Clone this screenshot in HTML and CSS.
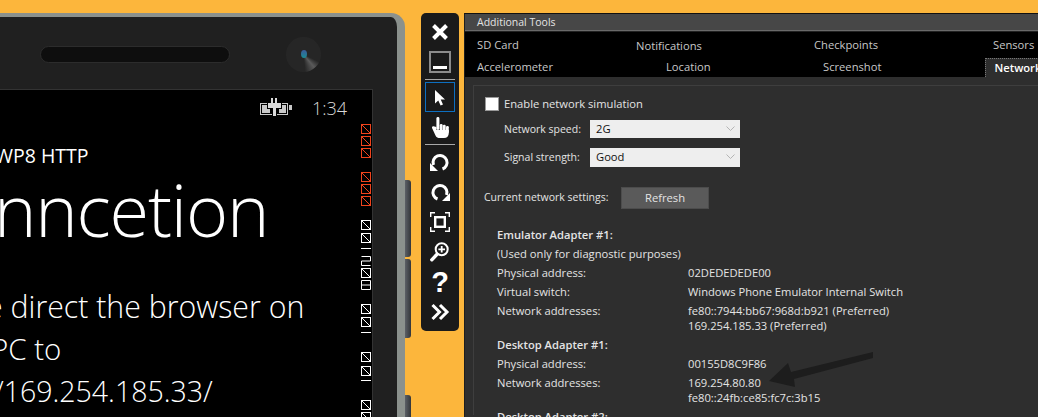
FILE: index.html
```html
<!DOCTYPE html>
<html lang="en">
<head>
  <meta charset="UTF-8">
  <title>Windows Phone Emulator - Additional Tools</title>
  <link rel="stylesheet" href="styles.css">
</head>
<body>
<div class="stage">
  <div class="phone">
    <div class="bezel">
      <div class="speaker"></div>
      <div class="camera"><span class="lens"></span></div>
    </div>
    <div class="screen">
      <div class="status">
        <svg class="battery" width="32" height="18" viewBox="0 0 32 18">
          <rect x="0.5" y="5.5" width="27" height="11" fill="none" stroke="#c8c8c8"/>
          <rect x="2" y="7" width="8" height="8" fill="#c8c8c8"/>
          <rect x="19" y="7" width="7" height="8" fill="#c8c8c8"/>
          <rect x="29" y="7" width="3" height="5" fill="#c8c8c8"/>
          <path d="M7 4h15v7h-5v7h-5v-7H7z" fill="#000"/>
          <path d="M11 0h2v5h2V0h2v5h4v5h-5v8h-3v-8H8V5h3z" fill="#d8d8d8"/>
        </svg>
        <span class="clock">1:34</span>
      </div>
      <p class="app-title">WP8 HTTP</p>
      <h1 class="page-title">nncetion</h1>
      <p class="body-text">
        <span class="line line-a">e direct the browser on</span>
        <span class="line line-b">PC to</span>
        <span class="line line-c">/169.254.185.33/</span>
      </p>

      <svg class="counters" width="12" height="327" viewBox="0 0 12 327">
        <defs>
          <g id="cell">
            <rect x="1.500" y="0.500" width="9" height="9" fill="none" stroke="currentColor"/>
            <path d="M1.500 0.500l9 9" stroke="currentColor"/>
          </g>
        </defs>
        <g class="counter-red">
          <use href="#cell" y="0"/><use href="#cell" y="12"/><use href="#cell" y="24"/>
          <use href="#cell" y="48"/><use href="#cell" y="60"/><use href="#cell" y="72"/>
        </g>
        <g class="counter-white">
          <use href="#cell" y="96"/><use href="#cell" y="109"/>
          <path d="M1 124.500h10"/>
          <path d="M1.500 132.500h9v4.500h-9v4.500h9"/>
          <use href="#cell" y="144"/>
          <path d="M1.500 156.500h9v9h-9zM1.500 161h9"/>
          <use href="#cell" y="180"/><use href="#cell" y="193"/>
          <path d="M1 208.500h10"/>
          <use href="#cell" y="228"/><use href="#cell" y="242"/>
          <path d="M1 256.500h10"/>
          <use href="#cell" y="276"/><use href="#cell" y="288"/>
        </g>
      </svg>
    </div>
  </div>

  <div class="side-keys">
    <span class="key key-a"></span>
    <span class="key key-b"></span>
    <span class="key key-c"></span>
  </div>

  <div class="toolbar">
    <div class="tool">
      <svg viewBox="0 0 30 30"><path d="M8.500 8.500l13 13M21.500 8.500l-13 13" stroke="#fff" stroke-width="4" fill="none"/></svg>
    </div>
    <div class="tool">
      <svg viewBox="0 0 30 30"><rect x="5" y="5" width="20" height="20" fill="none" stroke="#8c8c8c" stroke-width="2"/><rect x="8" y="19" width="14" height="3" fill="#fff"/></svg>
    </div>
    <div class="tool-sep"></div>
    <div class="tool tool-active">
      <svg viewBox="0 0 30 30"><path d="M10 8v13.500l3.300-3.100 2.300 5.100 2.400-1.100-2.300-4.900H20z" fill="#fff"/></svg>
    </div>
    <div class="tool">
      <svg viewBox="0 0 30 30" fill="#fff">
        <rect x="11.400" y="5" width="3" height="13" rx="1.400"/>
        <rect x="14.800" y="12" width="2.800" height="8" rx="1.200"/>
        <rect x="17.900" y="12.800" width="2.800" height="8" rx="1.200"/>
        <rect x="21" y="14" width="2.800" height="7" rx="1.200"/>
        <path d="M11.400 15l-2.900-.8c-1.500-.2-1.900 1.300-1.100 2.600l3.100 6.700c.8 2 2.500 2.500 4.500 2.500h4c3 0 4.800-2 4.800-5v-3H11.400z"/>
      </svg>
    </div>
    <div class="tool-sep"></div>
    <div class="tool">
      <svg viewBox="0 0 30 30"><g transform="matrix(-1 0 0 1 30 0)"><path d="M12.500 22A7 7 0 1 1 21.500 18" fill="none" stroke="#fff" stroke-width="3"/><path d="M25 16v8h-8z" fill="#fff"/></g></svg>
    </div>
    <div class="tool">
      <svg viewBox="0 0 30 30"><path d="M12.500 22A7 7 0 1 1 21.500 18" fill="none" stroke="#fff" stroke-width="3"/><path d="M25 16v8h-8z" fill="#fff"/></svg>
    </div>
    <div class="tool">
      <svg viewBox="0 0 30 30" fill="none" stroke="#fff">
        <path d="M5.700 10V5.700H10M20 5.700h4.300V10M24.300 20v4.300H20M10 24.300H5.700V20" stroke-width="1.400"/>
        <rect x="10.200" y="10.200" width="9.600" height="9.600" stroke-width="2.400"/>
      </svg>
    </div>
    <div class="tool">
      <svg viewBox="0 0 30 30" fill="none" stroke="#fff">
        <circle cx="16.700" cy="12.300" r="6" stroke-width="2"/>
        <path d="M16.700 9v6.600M13.400 12.300H20" stroke-width="1.800"/>
        <path d="M11.800 17.500l-5 5.300" stroke-width="3.400" stroke-linecap="round"/>
      </svg>
    </div>
    <div class="tool tool-help">?</div>
    <div class="tool">
      <svg viewBox="0 0 30 30"><path d="M7.500 8l7 7-7 7M15 8l7 7-7 7" fill="none" stroke="#fff" stroke-width="3"/></svg>
    </div>
  </div>

  <div class="panel">
    <div class="panel-title">Additional Tools</div>
    <div class="tabs">
      <div class="tab-row tab-row-top">
        <span class="tab">SD Card</span>
        <span class="tab tab-low">Notifications</span>
        <span class="tab">Checkpoints</span>
        <span class="tab">Sensors</span>
      </div>
      <div class="tab-row tab-row-bottom">
        <span class="tab">Accelerometer</span>
        <span class="tab">Location</span>
        <span class="tab">Screenshot</span>
        <span class="tab tab-active">Network</span>
      </div>
    </div>
    <div class="group">
      <label class="check-row"><span class="checkbox"></span><span class="check-label">Enable network simulation</span></label>
      <div class="field field-speed">
        <span class="field-label">Network speed:</span>
        <div class="combo">2G <svg width="9" height="5" viewBox="0 0 9 5"><path d="M.5.500l4 4 4-4" fill="none" stroke="#b4b4b4"/></svg></div>
      </div>
      <div class="field field-signal">
        <span class="field-label">Signal strength:</span>
        <div class="combo">Good <svg width="9" height="5" viewBox="0 0 9 5"><path d="M.5.500l4 4 4-4" fill="none" stroke="#b4b4b4"/></svg></div>
      </div>
      <div class="refresh-row">
        <span class="refresh-label">Current network settings:</span>
        <button class="refresh">Refresh</button>
      </div>
      <div class="details">
        <h3>Emulator Adapter #1:</h3>
        <p>(Used only for diagnostic purposes)</p>
        <div class="kv"><span>Physical address:</span><span>02DEDEDEDE00</span></div>
        <div class="kv"><span>Virtual switch:</span><span>Windows Phone Emulator Internal Switch</span></div>
        <div class="kv"><span>Network addresses:</span><span>fe80::7944:bb67:968d:b921 (Preferred)</span></div>
        <div class="kv kv-more"><span></span><span>169.254.185.33 (Preferred)</span></div>
        <h3>Desktop Adapter #1:</h3>
        <div class="kv"><span>Physical address:</span><span>00155D8C9F86</span></div>
        <div class="kv"><span>Network addresses:</span><span>169.254.80.80</span></div>
        <div class="kv kv-more"><span></span><span>fe80::24fb:ce85:fc7c:3b15</span></div>
        <h3>Desktop Adapter #2:</h3>
      </div>
    </div>
    <svg class="callout" width="120" height="50" viewBox="0 0 120 50">
      <path d="M108 0v6L29 27l1 8-26-6 19-18 3 9z" fill="#1d1d1d"/>
    </svg>
  </div>
</div>
</body>
</html>
```

FILE: styles.css
```css
:root {
  --orange: #fcb63c;
  --bezel: #202020;
  --panel-bg: #2e2e2e;
  --panel-text: #e4e4e4;
}
* { box-sizing: border-box; margin: 0; padding: 0; }
html, body { height: 100%; overflow: hidden; }
body { background: var(--orange); font-family: "Open Sans", Arial, sans-serif; }
.stage { display: flex; align-items: flex-start; height: 417px; padding-top: 13px; }

/* phone */
.phone {
  width: 405px;
  height: 404px;
  flex: none;
  background: var(--bezel);
  border-top: 4px solid #8b918d;
  border-right: 8px solid #8b918d;
  border-top-right-radius: 14px;
  padding-right: 24px;
  display: flex;
  flex-direction: column;
}
.bezel { height: 73px; flex: none; display: flex; align-items: center; padding-left: 40px; border-bottom: 1px solid #333; }
.speaker { width: 190px; height: 17px; margin-top: 3px; background: #0e0e0e; border: 1px solid #2c2c2c; border-radius: 9px; }
.camera {
  width: 35px;
  height: 35px;
  margin-left: 56px;
  margin-top: 3px;
  border-radius: 50%;
  background: conic-gradient(#262626 0 115deg, #5a5a5a 140deg, #262626 175deg, #262626 360deg);
  display: flex;
  align-items: center;
  justify-content: center;
}
.lens { width: 6px; height: 8px; border-radius: 50%; background: linear-gradient(#3c5a9a, #1a8c94); margin-bottom: 2px; }
.screen {
  position: relative;
  flex: 1;
  background: #000;
  border-right: 1px solid #333;
  color: #fff;
  overflow: hidden;
}
.status { display: flex; align-items: flex-start; height: 32px; padding-left: 260px; padding-top: 7px; }
.battery { margin-top: 1px; }
.clock { margin-left: 20px; font-size: 18px; font-weight: 300; line-height: 22px; color: #d8d8d8; }
.app-title { margin-top: 21px; margin-left: -5px; font-size: 19.500px; line-height: 26px; white-space: nowrap; }
.page-title { margin-top: 4px; margin-left: -6px; font-size: 72px; font-weight: 300; line-height: 72px; letter-spacing: -1.200px; }
.body-text { margin-top: 41px; font-size: 29.500px; font-weight: 300; line-height: 42px; white-space: nowrap; }
.line { display: block; }
.line-a { margin-left: -14px; font-size: 30.300px; }
.line-b { margin-left: -9px; }
.line-c { margin-left: -6px; font-size: 28.500px; }
.counters { position: absolute; top: 34px; right: 0; }
.counter-red { color: #f0431c; }
.counter-white { color: #fff; }
.counter-white path { fill: none; stroke: #fff; }

.side-keys { flex: none; width: 6px; display: flex; flex-direction: column; margin-top: 167px; }
.key { display: block; background: linear-gradient(90deg, #5c6066, #33363a); border-radius: 0 3px 3px 0; }
.key-a { height: 77px; }
.key-b { height: 79px; margin-top: 2px; }
.key-c { height: 40px; margin-top: 57px; }

/* emulator toolbar */
.toolbar {
  flex: none;
  width: 38px;
  margin-left: 10px;
  padding: 4px 4px;
  background: #1a1a1a;
  border-radius: 5px;
  display: flex;
  flex-direction: column;
}
.tool { width: 30px; height: 30px; display: flex; align-items: center; justify-content: center; }
.tool svg { width: 30px; height: 30px; display: block; flex: none; }
.tool-active { border: 1px solid #0d6fc0; }
.tool-sep { height: 1px; margin: 2px 0; background: #a8a8a8; }
.tool-help { font-family: "Liberation Sans", Arial, sans-serif; font-weight: 700; font-size: 29px; color: #fff; }

/* additional tools */
.panel {
  position: relative;
  flex: none;
  width: 574px;
  height: 404px;
  margin-left: 5px;
  background: var(--panel-bg);
  border-top: 1px solid #111;
  border-left: 1px solid #1e1e1e;
  font-size: 11.200px;
  color: var(--panel-text);
  overflow: hidden;
  white-space: nowrap;
}
.panel-title { height: 17px; line-height: 17px; padding-left: 12px; font-size: 10.500px; background: #474747; border-bottom: 1px solid #6a6a6a; }
.tabs { height: 46px; background: #000; border-top: 1px solid #222; color: #c8c8c8; }
.tab-row { display: grid; }
.tab-row-top { height: 26px; grid-template-columns: 159px 178px 179px 1fr; }
.tab-row-bottom { height: 19px; grid-template-columns: 189px 157px 173.500px 1fr; }
.tab { padding-left: 12px; line-height: 26px; }
.tab-low { line-height: 28px; }
.tab-row-bottom .tab { line-height: 17px; }
.tab-row-bottom .tab-active { padding-left: 9px; background: var(--panel-bg); color: #fff; font-weight: 600; border: 1px dotted #777; border-bottom: 0; border-right: 0; }
.group { margin: 8px 0 0 8px; height: 330px; border-top: 1px solid #3e3e3e; border-left: 1px solid #3e3e3e; }
.check-row { display: flex; align-items: center; height: 14px; margin-top: 11px; padding-left: 11px; }
.checkbox { width: 14px; height: 14px; margin-right: 5px; background: #fff; border: 1px solid #999; }
.check-label { padding-bottom: 2px; }
.field { display: flex; align-items: center; padding-left: 30px; }
.field-label { width: 86px; font-size: 10.500px; }
.field-signal .field-label { padding-bottom: 2px; }
.field-speed { margin-top: 9px; height: 18px; }
.field-signal { margin-top: 10px; height: 19px; }
.combo { width: 150px; height: 100%; padding: 0 5px 2px 6px; background: #eee; color: #111; display: flex; align-items: center; justify-content: space-between; }
.refresh-row { display: flex; align-items: center; margin-top: 20px; padding-left: 10px; }
.refresh-label { width: 137px; font-size: 10.500px; padding-bottom: 2px; }
.refresh { width: 88px; height: 22px; padding-bottom: 2px; background: #5a5a5a; border: 1px solid #4c4c4c; color: var(--panel-text); font: inherit; }
.details { margin-top: 16px; padding-left: 23px; line-height: 19px; }
.details h3 { font-size: inherit; font-weight: 600; }
.kv { display: grid; grid-template-columns: 191px 1fr; }
.kv-more { line-height: 15px; margin-top: -2px; }
.kv-more + h3 { margin-top: 2px; }
.callout { position: absolute; left: 300px; top: 338px; filter: blur(.7px); }
```
